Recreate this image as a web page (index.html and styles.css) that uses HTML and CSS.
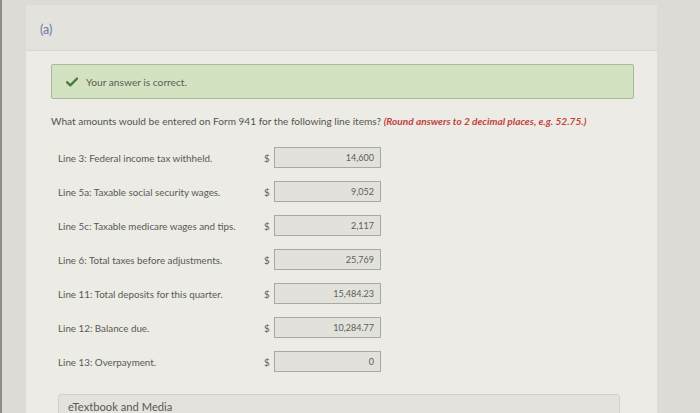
FILE: index.html
```html
<!DOCTYPE html>
<html>
<head>
<meta charset="utf-8">
<link rel="stylesheet" href="styles.css">
</head>
<body>
<div class="edge"></div>
<div class="card">
  <div class="card-head"><span class="part">(a)</span></div>
  <div class="card-body">
    <div class="notice">
      <svg class="check" viewBox="0 0 12 10" width="12" height="10"><path d="M1 5.2 L4.3 8.3 L11 1.6" fill="none" stroke="#4d7d3c" stroke-width="2.4" stroke-linecap="round" stroke-linejoin="round"/></svg>
      <span>Your answer is correct.</span>
    </div>
    <p class="question">What amounts would be entered on Form 941 for the following line items? <em>(Round answers to 2 decimal places, e.g. 52.75.)</em></p>
    <div class="rows">
      <div class="row"><span class="label">Line 3: Federal income tax withheld.</span><span class="cur">$</span><span class="field">14,600</span></div>
      <div class="row"><span class="label">Line 5a: Taxable social security wages.</span><span class="cur">$</span><span class="field">9,052</span></div>
      <div class="row"><span class="label">Line 5c: Taxable medicare wages and tips.</span><span class="cur">$</span><span class="field">2,117</span></div>
      <div class="row"><span class="label">Line 6: Total taxes before adjustments.</span><span class="cur">$</span><span class="field">25,769</span></div>
      <div class="row"><span class="label">Line 11: Total deposits for this quarter.</span><span class="cur">$</span><span class="field">15,484.23</span></div>
      <div class="row"><span class="label">Line 12: Balance due.</span><span class="cur">$</span><span class="field">10,284.77</span></div>
      <div class="row"><span class="label">Line 13: Overpayment.</span><span class="cur">$</span><span class="field">0</span></div>
    </div>
    <div class="media">eTextbook and Media</div>
  </div>
</div>
</body>
</html>
```

FILE: styles.css
```css
html, body {
  margin: 0;
  padding: 0;
  height: 413px;
  overflow: hidden;
}
body {
  background: #dcdbd6;
  font-family: Lato, "Open Sans", sans-serif;
  color: #56564f;
  display: flex;
  align-items: flex-start;
}
.edge {
  width: 2px;
  height: 413px;
  background: #8d8c88;
  flex: none;
}
.card {
  margin-left: 24px;
  margin-top: 5px;
  width: 631px;
  height: 420px;
  background: #ecebe6;
  flex: none;
}
.card-head {
  height: 46px;
  background: #e3e2dd;
  border-bottom: 1px solid #d9d8d3;
  padding-left: 14px;
  box-sizing: border-box;
}
.part {
  display: inline-block;
  margin-top: 17px;
  font-size: 12.5px;
  color: #6a78a6;
}
.card-body {
  padding: 13px 23px 0 25px;
}
.notice {
  height: 35px;
  box-sizing: border-box;
  background: #d3e3c2;
  border: 1px solid #a9b99c;
  border-radius: 2px;
  display: flex;
  align-items: center;
  padding-left: 14px;
  font-size: 10.2px;
  color: #5c5c54;
}
.check {
  margin-right: 8px;
}
.question {
  margin: 16px 0 0 0;
  font-size: 10.1px;
  color: #55554e;
}
.question em {
  color: #c4413d;
  font-weight: bold;
}
.rows {
  margin-top: 20px;
  padding-left: 7px;
  display: flex;
  flex-direction: column;
  gap: 13px;
}
.row {
  display: flex;
  align-items: center;
  height: 21px;
}
.label {
  width: 206px;
  font-size: 9.8px;
  color: #5a5a53;
}
.cur {
  width: 10px;
  font-size: 9.8px;
  color: #5a5a53;
}
.field {
  width: 107px;
  height: 21px;
  box-sizing: border-box;
  background: #e2e1dc;
  border: 1px solid #a9a9a3;
  font-size: 9px;
  color: #5e5e58;
  display: flex;
  align-items: center;
  justify-content: flex-end;
  padding-right: 6px;
}
.media {
  margin-top: 22px;
  margin-left: 7px;
  width: 562px;
  height: 30px;
  box-sizing: border-box;
  background: #e3e2dd;
  border: 1px solid #d2d1cc;
  border-radius: 3px;
  padding: 5px 0 0 9px;
  font-size: 11.2px;
  line-height: 13px;
  color: #5a5a53;
}
```
